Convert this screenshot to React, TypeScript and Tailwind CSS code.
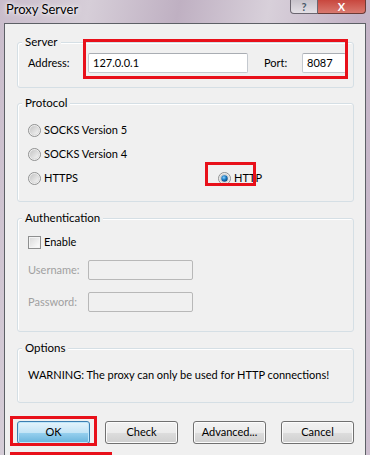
import React from "react";

const font = "font-['Lato','Liberation_Sans',sans-serif]";

const Radio = ({ checked }: { checked?: boolean }) => (
    <svg width="13" height="13" viewBox="0 0 13 13" className="shrink-0">
        <defs>
            <linearGradient id="rg" x1="0" y1="0" x2="1" y2="1">
                <stop offset="0" stopColor="#c4c4c4" />
                <stop offset="1" stopColor="#f6f6f6" />
            </linearGradient>
            <radialGradient id="dot" cx="0.4" cy="0.35" r="0.7">
                <stop offset="0" stopColor="#8fd2ff" />
                <stop offset="0.5" stopColor="#1b7cc4" />
                <stop offset="1" stopColor="#0b3f73" />
            </radialGradient>
        </defs>
        <circle cx="6.5" cy="6.5" r="6" fill="#f4f4f4" stroke="#8e8f8f" />
        <circle cx="6.5" cy="6.5" r="4.5" fill="url(#rg)" stroke="#d0d0d0" strokeWidth="0.6" />
        {checked && <circle cx="6.5" cy="6.5" r="3.2" fill="url(#dot)" />}
    </svg>
);

// group box: the caption is pulled up over the top border
const Group = ({ title, className, children }: { title: string; className: string; children: React.ReactNode }) => (
    <div className={`border border-[#d5dfe5] rounded-[3px] shadow-[inset_1px_1px_0_#fff] ${className}`}>
        <div className="-mt-[8px] ml-[4px] px-[3px] w-fit h-[14px] leading-[14px] text-[11.5px] text-black bg-[#f0f0f0]">{title}</div>
        {children}
    </div>
);

const Button = ({ label, primary }: { label: string; primary?: boolean }) => (
    <div
        className={
            primary
                ? "w-[73px] h-[23px] rounded-[3px] border border-[#3c7fb1] bg-[linear-gradient(#e5f4fc_0%,#c4e5f6_50%,#98d1ef_51%,#68b3db_100%)] shadow-[inset_0_0_0_1px_#bfe7fb] flex items-center justify-center text-black"
                : "w-[73px] h-[23px] rounded-[3px] border border-[#707070] bg-[linear-gradient(#f2f2f2_0%,#ebebeb_50%,#dddddd_51%,#cfcfcf_100%)] shadow-[inset_0_0_0_1px_#fcfcfc] flex items-center justify-center text-black"
        }
    >
        {label}
    </div>
);

export default function App() {
    return (
        <div className={`relative w-[370px] h-[455px] overflow-hidden flex flex-col bg-[linear-gradient(100deg,#c9bccb_0%,#d6ced8_20%,#bfb0c2_40%,#d8d0da_60%,#c3b3c6_80%,#cdbfcf_100%)] ${font}`}>
            {/* title bar */}
            <div className="h-[23px] flex items-start justify-between pl-[6px] pr-[4px] shrink-0">
                <div className="text-[13px] leading-[16px] text-black pt-[1px] [text-shadow:0_0_6px_#fff,0_0_3px_#fff]">Proxy Server</div>
                <div className="flex">
                    <div className="w-[28px] h-[14px] rounded-bl-[4px] border border-t-0 border-[#6b6670] bg-[linear-gradient(#c7c2ca,#e4e0e6)] flex items-end justify-center">
                        <span className="text-[11px] leading-[12px] font-bold text-[#4a5a6a]">?</span>
                    </div>
                    <div className="w-[48px] h-[14px] rounded-br-[4px] border border-l-0 border-t-0 border-[#6b3a36] bg-[linear-gradient(#c8473e,#d9796f)] flex items-end justify-center">
                        <span className="text-[11px] leading-[12px] font-bold text-white">X</span>
                    </div>
                </div>
            </div>

            {/* client area */}
            <div className="ml-[4px] w-[362px] flex-1 bg-[#f0f0f0] border border-b-0 border-[#5d6066] pl-[12px] pr-[11px] pt-[18px] flex flex-col text-[11px] text-black">
                <Group title="Server" className="h-[46px]">
                    <div className="flex items-center h-[20px] pl-[10px] mt-[4px]">
                        <div className="w-[60px]">Address:</div>
                        <div className="w-[160px] h-[20px] bg-white border border-[#c4c9cf] border-t-[#a9adb3] rounded-[2px] pl-[4px] leading-[18px]">127.0.0.1</div>
                        <div className="ml-[16px] w-[38px]">Port:</div>
                        <div className="w-[44px] h-[20px] bg-white border border-[#c4c9cf] border-t-[#a9adb3] rounded-[2px] pl-[4px] leading-[18px]">8087</div>
                    </div>
                </Group>

                <Group title="Protocol" className="mt-[15px] h-[99px]">
                    <div className="pl-[10px] mt-[8px]">
                        <div className="flex items-center gap-[3px] h-[24px]">
                            <Radio />
                            <span>SOCKS Version 5</span>
                        </div>
                        <div className="flex items-center gap-[3px] h-[24px]">
                            <Radio />
                            <span>SOCKS Version 4</span>
                        </div>
                        <div className="flex items-center h-[24px]">
                            <div className="w-[190px] flex items-center gap-[3px]">
                                <Radio />
                                <span>HTTPS</span>
                            </div>
                            <div className="flex items-center gap-[3px]">
                                <Radio checked />
                                <span>HTTP</span>
                            </div>
                        </div>
                    </div>
                </Group>

                <Group title="Authentication" className="mt-[16px] h-[114px]">
                    <div className="pl-[10px] mt-[7px]">
                        <div className="flex items-center gap-[3px] h-[20px]">
                            <div className="w-[13px] h-[13px] border border-[#8e8f8f] bg-[linear-gradient(135deg,#d8d8d8,#ffffff)] shadow-[inset_0_0_0_1px_#f4f4f4] shrink-0" />
                            <span>Enable</span>
                        </div>
                        <div className="flex items-center mt-[8px] h-[20px] text-[#a0a0a0]">
                            <div className="w-[60px]">Username:</div>
                            <div className="w-[105px] h-[20px] border border-[#b8b8b8] rounded-[2px] bg-[#f0f0f0]" />
                        </div>
                        <div className="flex items-center mt-[12px] h-[20px] text-[#a0a0a0]">
                            <div className="w-[60px]">Password:</div>
                            <div className="w-[105px] h-[20px] border border-[#b8b8b8] rounded-[2px] bg-[#f0f0f0]" />
                        </div>
                    </div>
                </Group>

                <Group title="Options" className="mt-[16px] h-[55px]">
                    <div className="pl-[10px] mt-[13px] h-[14px] leading-[14px] whitespace-nowrap">WARNING: The proxy can only be used for HTTP connections!</div>
                </Group>

                <div className="mt-[18px] flex justify-between w-[337px]">
                    <Button label="OK" primary />
                    <Button label="Check" />
                    <Button label="Advanced..." />
                    <Button label="Cancel" />
                </div>
            </div>

            {/* red annotation boxes */}
            <div className="absolute left-[83px] top-[39px] w-[265px] h-[40px] border-[3px] border-[#e8101a]" />
            <div className="absolute left-[205px] top-[162px] w-[51px] h-[24px] border-[3px] border-[#e8101a]" />
            <div className="absolute left-[10px] top-[416px] w-[87px] h-[30px] border-[3px] border-[#e8101a]" />
            <div className="absolute left-[10px] top-[452px] w-[102px] h-[3px] bg-[#e8101a]" />
        </div>
    );
}
